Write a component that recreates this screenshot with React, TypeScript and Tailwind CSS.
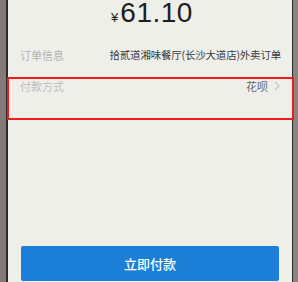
import React from 'react';

const App = () => {
  return (
    <div className="relative w-[298px] h-[282px] overflow-hidden flex bg-[#8a807d]" style={{ fontFamily: '"Noto Sans CJK SC", "Liberation Sans", sans-serif' }}>
      {/* left bezel */}
      <div className="w-[6px] bg-[#867a78]" />
      <div className="w-[2px] bg-[#2c2a2a]" />

      {/* screen */}
      <div className="flex-1 bg-[#efefea] flex flex-col">
        <div className="h-[26px] flex items-baseline justify-center pl-[4px]">
          <span className="text-[13px] text-[#222] mr-[2px] leading-[26px]" style={{ fontFamily: '"Liberation Sans", sans-serif' }}>¥</span>
          <span className="text-[28px] text-[#1e1e1e] leading-[26px] tracking-[0.5px]" style={{ fontFamily: '"Liberation Sans", sans-serif' }}>61.10</span>
        </div>

        <div className="mt-[18px] h-[22px] flex items-center justify-between pl-[12px] pr-[11px]">
          <span className="text-[11px] text-[#b3b3b0]">订单信息</span>
          <span className="text-[10.5px] text-[#3a3a3a] tracking-[-0.2px]">拾贰道湘味餐厅(长沙大道店)外卖订单</span>
        </div>

        <div className="mt-[10px] h-[42px] flex items-start justify-between pl-[12px] pr-[12px] pt-[2px]">
          <span className="text-[11px] text-[#bdbdba]">付款方式</span>
          <span className="flex items-center gap-[6px]">
            <span className="text-[11px] text-[#666]">花呗</span>
            <svg width="6" height="10" viewBox="0 0 6 10" fill="none" stroke="#c4c4c0" strokeWidth="1.2">
              <path d="M1 1l4 4-4 4" />
            </svg>
          </span>
        </div>

        <div className="flex-1" />

        <div className="px-[13px] pb-[1px]">
          <div className="h-[35px] bg-[#1b7fd8] rounded-[2px] flex items-center justify-center">
            <span className="text-[13px] text-white font-medium">立即付款</span>
          </div>
        </div>
      </div>

      {/* right bezel */}
      <div className="w-[1px] bg-[#2c2a2a]" />
      <div className="w-[5px] bg-[#8c8482]" />

      {/* highlight annotation */}
      <div className="absolute left-[7px] top-[77px] w-[287px] h-[43px] border-2 border-[#ee1c1c] rounded-[1px]" />
    </div>
  );
};

export default App;
